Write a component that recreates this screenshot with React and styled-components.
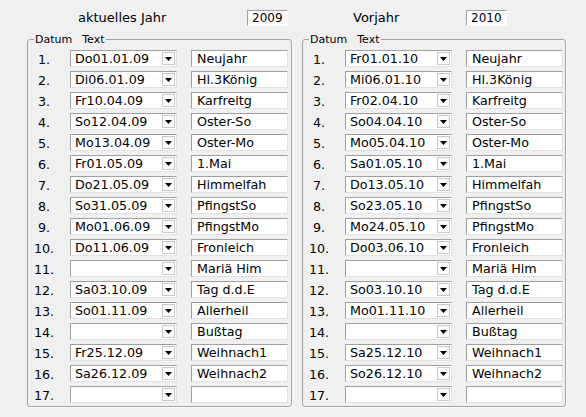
import React from "react";
import styled, { createGlobalStyle } from "styled-components";

const GlobalStyle = createGlobalStyle`
  html, body {
    margin: 0;
    padding: 0;
    background: #f0f0f0;
  }
  body {
    font-family: "DejaVu Sans", Verdana, sans-serif;
    color: #000;
  }
`;

const Page = styled.div`
  display: flex;
  gap: 10px;
  padding-left: 27px;
  width: 586px;
  height: 417px;
  box-sizing: border-box;
  background: #f0f0f0;
`;

const Column = styled.div`
  display: flex;
  flex-direction: column;
  width: ${(p) => p.$width}px;
`;

const Header = styled.div`
  display: flex;
  align-items: flex-start;
  height: 33px;
  box-sizing: border-box;
  padding-top: 10px;
  padding-left: 51px;
`;

const HeaderLabel = styled.div`
  width: ${(p) => p.$width}px;
  font-size: 13px;
  line-height: 16px;
`;

const YearBox = styled.div`
  width: 41px;
  height: 16px;
  box-sizing: border-box;
  background: #fff;
  border-style: solid;
  border-width: 1px;
  border-color: #a0a0a0 #ffffff #ffffff #a0a0a0;
  font-size: 12px;
  line-height: 14px;
  padding-left: 4px;
`;

const Group = styled.fieldset`
  margin: 0;
  padding: 4px 0 3px 0;
  border: 1px solid #a3a3a3;
  border-radius: 3px;
  box-shadow: 1px 1px 0 #fcfcfc;
  min-width: 0;
  width: 100%;
  box-sizing: border-box;
`;

const Legend = styled.legend`
  display: block;
  margin-left: 6px;
  padding: 0 2px 0 1px;
  font-size: 11px;
  line-height: 13px;
  white-space: nowrap;
`;

const LegendPart = styled.span`
  margin-left: ${(p) => p.$gap || 0}px;
`;

const Rows = styled.div`
  display: flex;
  flex-direction: column;
  gap: 4px;
`;

const Row = styled.div`
  display: flex;
  align-items: center;
  height: 17px;
`;

const Num = styled.div`
  width: 32px;
  text-align: center;
  font-size: 12.7px;
  line-height: 17px;
  padding-top: 1px;
  box-sizing: border-box;
`;

const Combo = styled.div`
  display: flex;
  align-items: center;
  margin-left: 10px;
  width: 107px;
  height: 17px;
  box-sizing: border-box;
  background: #fff;
  border-style: solid;
  border-width: 1px;
  border-color: #a0a0a0 #e2e2e2 #e2e2e2 #a0a0a0;
`;

const ComboText = styled.div`
  flex: 1;
  padding-left: 4px;
  padding-top: 1px;
  font-size: 12.7px;
  line-height: 14px;
  white-space: nowrap;
  overflow: hidden;
`;

const ArrowButton = styled.div`
  display: flex;
  align-items: center;
  justify-content: center;
  width: 13px;
  height: 13px;
  margin-right: 1px;
  box-sizing: border-box;
  border: 1px solid #c9c9c9;
  background: #fbfbfb;
`;

const TextBox = styled.div`
  margin-left: 14px;
  width: 97px;
  height: 17px;
  box-sizing: border-box;
  background: #fff;
  border-style: solid;
  border-width: 1px;
  border-color: #a0a0a0 #e2e2e2 #e2e2e2 #a0a0a0;
  padding-left: 5px;
  padding-top: 1px;
  font-size: 12.7px;
  line-height: 14px;
  white-space: nowrap;
  overflow: hidden;
`;

const Arrow = () => (
  <svg width="7" height="4" viewBox="0 0 7 4">
    <path d="M0 0 H7 L3.5 4 Z" fill="#000" />
  </svg>
);

const left = [
  ["Do01.01.09", "Neujahr"],
  ["Di06.01.09", "Hl.3König"],
  ["Fr10.04.09", "Karfreitg"],
  ["So12.04.09", "Oster-So"],
  ["Mo13.04.09", "Oster-Mo"],
  ["Fr01.05.09", "1.Mai"],
  ["Do21.05.09", "Himmelfah"],
  ["So31.05.09", "PfingstSo"],
  ["Mo01.06.09", "PfingstMo"],
  ["Do11.06.09", "Fronleich"],
  ["", "Mariä Him"],
  ["Sa03.10.09", "Tag d.d.E"],
  ["So01.11.09", "Allerheil"],
  ["", "Bußtag"],
  ["Fr25.12.09", "Weihnach1"],
  ["Sa26.12.09", "Weihnach2"],
  ["", ""],
];

const right = [
  ["Fr01.01.10", "Neujahr"],
  ["Mi06.01.10", "Hl.3König"],
  ["Fr02.04.10", "Karfreitg"],
  ["So04.04.10", "Oster-So"],
  ["Mo05.04.10", "Oster-Mo"],
  ["Sa01.05.10", "1.Mai"],
  ["Do13.05.10", "Himmelfah"],
  ["So23.05.10", "PfingstSo"],
  ["Mo24.05.10", "PfingstMo"],
  ["Do03.06.10", "Fronleich"],
  ["", "Mariä Him"],
  ["So03.10.10", "Tag d.d.E"],
  ["Mo01.11.10", "Allerheil"],
  ["", "Bußtag"],
  ["Sa25.12.10", "Weihnach1"],
  ["So26.12.10", "Weihnach2"],
  ["", ""],
];

const Panel = ({ width, label, labelWidth, year, rows }) => (
  <Column $width={width}>
    <Header>
      <HeaderLabel $width={labelWidth}>{label}</HeaderLabel>
      <YearBox>{year}</YearBox>
    </Header>
    <Group>
      <Legend>
        <LegendPart>Datum</LegendPart>
        <LegendPart $gap={10}>Text</LegendPart>
      </Legend>
      <Rows>
        {rows.map(([date, text], i) => (
          <Row key={i}>
            <Num>{i + 1}.</Num>
            <Combo>
              <ComboText>{date}</ComboText>
              <ArrowButton>
                <Arrow />
              </ArrowButton>
            </Combo>
            <TextBox>{text}</TextBox>
          </Row>
        ))}
      </Rows>
    </Group>
  </Column>
);

export default function App() {
  return (
    <>
      <GlobalStyle />
      <Page>
        <Panel width={265} label="aktuelles Jahr" labelWidth={169} year="2009" rows={left} />
        <Panel width={264} label="Vorjahr" labelWidth={113} year="2010" rows={right} />
      </Page>
    </>
  );
}
